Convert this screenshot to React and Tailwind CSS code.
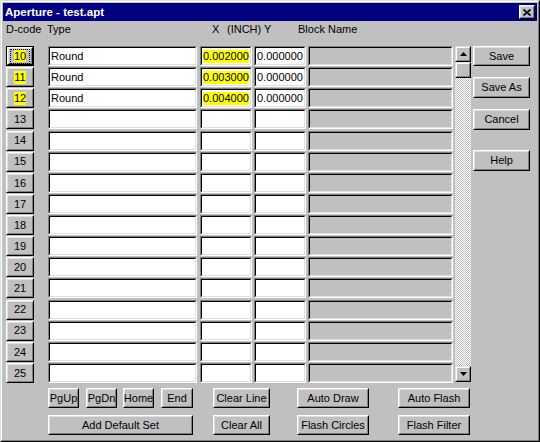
import React from "react";

const font = { fontFamily: '"Liberation Sans", Arial, sans-serif' };

function Btn({ w, h = "h-[20px]", focused, children }) {
  const inner = (
    <div className="h-full border border-t-white border-l-white border-b-black border-r-black">
      <div className="h-full border border-t-[#dfdfdf] border-l-[#dfdfdf] border-b-[#808080] border-r-[#808080] flex items-center justify-center whitespace-nowrap">
        {focused ? (
          <span className="border border-dotted border-black px-[3px] leading-[12px]">{children}</span>
        ) : (
          children
        )}
      </div>
    </div>
  );
  if (focused) {
    return <div className={`${w} ${h} border border-black`}>{inner}</div>;
  }
  return <div className={`${w} ${h}`}>{inner}</div>;
}

function Field({ w, gray, children }) {
  return (
    <div className={`${w} h-[20px] border border-t-[#808080] border-l-[#808080] border-b-white border-r-white`}>
      <div
        className={`h-full border border-t-black border-l-black border-b-[#dfdfdf] border-r-[#dfdfdf] flex items-center pl-[1px] overflow-hidden whitespace-nowrap ${
          gray ? "bg-[#c0c0c0]" : "bg-white"
        }`}
      >
        {children}
      </div>
    </div>
  );
}

function Hi({ children }) {
  return <span className="bg-[#ffff00] leading-[13px]">{children}</span>;
}

function Arrow({ down }) {
  return (
    <div className="w-[16px] h-[16px] border border-t-[#dfdfdf] border-l-[#dfdfdf] border-b-black border-r-black bg-[#c0c0c0]">
      <div className="h-full border border-t-white border-l-white border-b-[#808080] border-r-[#808080] flex items-center justify-center">
        <svg width="7" height="4" viewBox="0 0 7 4">
          {down ? <path d="M0 0h7L3.5 4z" fill="black" /> : <path d="M0 4h7L3.5 0z" fill="black" />}
        </svg>
      </div>
    </div>
  );
}

const rows = [
  { code: 10, type: "Round", x: "0.002000", y: "0.000000" },
  { code: 11, type: "Round", x: "0.003000", y: "0.000000" },
  { code: 12, type: "Round", x: "0.004000", y: "0.000000" },
];
for (let c = 13; c <= 25; c++) rows.push({ code: c });

export default function App() {
  return (
    <div style={font} className="w-[540px] h-[442px] border border-t-[#dfdfdf] border-l-[#dfdfdf] border-r-black border-b-black text-[11px] text-black select-none">
      <div className="h-full border border-t-white border-l-white border-r-[#808080] border-b-[#808080] bg-[#c0c0c0] p-[1px] flex flex-col">
        {/* title bar */}
        <div className="h-[18px] bg-[#000080] flex items-center pl-[2px] pr-[2px] shrink-0">
          <span className="text-white font-bold text-[11.5px] leading-[14px]">Aperture - test.apt</span>
          <div className="ml-auto w-[16px] h-[14px] border border-t-white border-l-white border-b-black border-r-black bg-[#c0c0c0]">
            <div className="h-full border border-t-[#dfdfdf] border-l-[#dfdfdf] border-b-[#808080] border-r-[#808080] flex items-center justify-center">
              <svg width="8" height="7" viewBox="0 0 8 7">
                <path d="M0.5 0.5L7.5 6.5M7.5 0.5L0.5 6.5" stroke="black" strokeWidth="1.6" />
              </svg>
            </div>
          </div>
        </div>

        {/* column headers */}
        <div className="h-[25px] flex items-start pt-[2px] leading-[13px] shrink-0">
          <span className="ml-[3px] w-[41px]">D-code</span>
          <span className="w-[165px]">Type</span>
          <span className="w-[15px]">X</span>
          <span className="w-[37px]">(INCH)</span>
          <span className="w-[34px]">Y</span>
          <span>Block Name</span>
        </div>

        {/* grid area */}
        <div className="flex items-start shrink-0">
          <div className="pl-[3px] flex flex-col">
            {rows.map((r) => (
              <div key={r.code} className="h-[21.13px] flex items-start">
                <Btn w="w-[28px]" focused={r.code === 10}>
                  {r.code <= 12 ? <Hi>{r.code}</Hi> : r.code}
                </Btn>
                <div className="ml-[14px]">
                  <Field w="w-[149px]">{r.type}</Field>
                </div>
                <div className="ml-[3px]">
                  <Field w="w-[52px]">{r.x ? <Hi>{r.x}</Hi> : null}</Field>
                </div>
                <div className="ml-[2px]">
                  <Field w="w-[52px]">{r.y}</Field>
                </div>
                <div className="ml-[2px]">
                  <Field w="w-[145px]" gray />
                </div>
              </div>
            ))}
          </div>

          {/* scrollbar */}
          <div className="ml-[2px] w-[16px] h-[336px] flex flex-col bg-[repeating-conic-gradient(#c0c0c0_0_25%,#ffffff_0_50%)] bg-[length:2px_2px]">
            <Arrow />
            <div className="w-[16px] h-[16px] border border-t-[#dfdfdf] border-l-[#dfdfdf] border-b-black border-r-black bg-[#c0c0c0]">
              <div className="h-full border border-t-white border-l-white border-b-[#808080] border-r-[#808080]" />
            </div>
            <div className="flex-1" />
            <Arrow down />
          </div>

          {/* right buttons */}
          <div className="ml-[2px] flex flex-col">
            <Btn w="w-[57px]">Save</Btn>
            <div className="mt-[11px]">
              <Btn w="w-[57px]" h="h-[21px]">Save As</Btn>
            </div>
            <div className="mt-[11px]">
              <Btn w="w-[57px]" h="h-[21px]">Cancel</Btn>
            </div>
            <div className="mt-[20px]">
              <Btn w="w-[57px]" h="h-[21px]">Help</Btn>
            </div>
          </div>
        </div>

        {/* bottom buttons */}
        <div className="mt-[4px] pl-[45px] flex items-start">
          <Btn w="w-[31px]">PgUp</Btn>
          <div className="ml-[7px]"><Btn w="w-[31px]">PgDn</Btn></div>
          <div className="ml-[6px]"><Btn w="w-[31px]">Home</Btn></div>
          <div className="ml-[7px]"><Btn w="w-[32px]">End</Btn></div>
          <div className="ml-[20px]"><Btn w="w-[57px]">Clear Line</Btn></div>
          <div className="ml-[27px]"><Btn w="w-[72px]">Auto Draw</Btn></div>
          <div className="ml-[29px]"><Btn w="w-[72px]">Auto Flash</Btn></div>
        </div>
        <div className="mt-[7px] pl-[45px] flex items-start">
          <Btn w="w-[145px]">Add Default Set</Btn>
          <div className="ml-[20px]"><Btn w="w-[57px]">Clear All</Btn></div>
          <div className="ml-[27px]"><Btn w="w-[72px]">Flash Circles</Btn></div>
          <div className="ml-[29px]"><Btn w="w-[72px]">Flash Filter</Btn></div>
        </div>
      </div>
    </div>
  );
}
